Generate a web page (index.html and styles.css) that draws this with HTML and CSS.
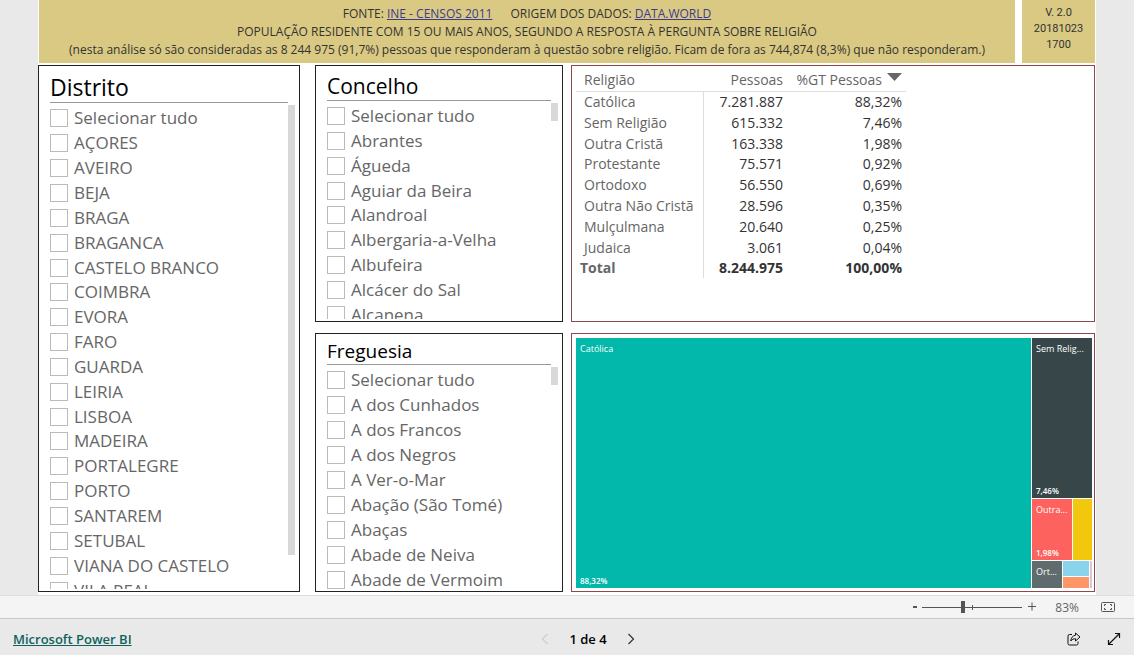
FILE: index.html
```html
<!DOCTYPE html>
<html lang="pt">
<head>
<meta charset="utf-8">
<title>Censos 2011 - Religião</title>
<link rel="stylesheet" href="styles.css">
</head>
<body>
<main class="report">
  <header class="banner">
    <div class="banner-text">
      <p>FONTE: <a href="#">INE - CENSOS 2011</a><span class="origin">ORIGEM DOS DADOS: <a href="#">DATA.WORLD</a></span></p>
      <p>POPULAÇÃO RESIDENTE COM 15 OU MAIS ANOS, SEGUNDO A RESPOSTA À PERGUNTA SOBRE RELIGIÃO</p>
      <p class="note">(nesta análise só são consideradas as 8 244 975 (91,7%) pessoas que responderam à questão sobre religião. Ficam de fora as 744,874 (8,3%) que não responderam.)</p>
    </div>
    <div class="version"><p>V. 2.0</p><p>20181023</p><p>1700</p></div>
  </header>
  <div class="visuals">
    <section class="slicer distrito">
      <h2>Distrito</h2>
      <div class="slicer-body">
        <div class="options">
          <label><input type="checkbox">Selecionar tudo</label>
          <label><input type="checkbox">AÇORES</label>
          <label><input type="checkbox">AVEIRO</label>
          <label><input type="checkbox">BEJA</label>
          <label><input type="checkbox">BRAGA</label>
          <label><input type="checkbox">BRAGANCA</label>
          <label><input type="checkbox">CASTELO BRANCO</label>
          <label><input type="checkbox">COIMBRA</label>
          <label><input type="checkbox">EVORA</label>
          <label><input type="checkbox">FARO</label>
          <label><input type="checkbox">GUARDA</label>
          <label><input type="checkbox">LEIRIA</label>
          <label><input type="checkbox">LISBOA</label>
          <label><input type="checkbox">MADEIRA</label>
          <label><input type="checkbox">PORTALEGRE</label>
          <label><input type="checkbox">PORTO</label>
          <label><input type="checkbox">SANTAREM</label>
          <label><input type="checkbox">SETUBAL</label>
          <label><input type="checkbox">VIANA DO CASTELO</label>
          <label><input type="checkbox">VILA REAL</label>
        </div>
        <div class="track"><div class="thumb thumb-long"></div></div>
      </div>
    </section>
    <div class="column">
      <section class="slicer concelho">
        <h2>Concelho</h2>
        <div class="slicer-body">
          <div class="options">
            <label><input type="checkbox">Selecionar tudo</label>
            <label><input type="checkbox">Abrantes</label>
            <label><input type="checkbox">Águeda</label>
            <label><input type="checkbox">Aguiar da Beira</label>
            <label><input type="checkbox">Alandroal</label>
            <label><input type="checkbox">Albergaria-a-Velha</label>
            <label><input type="checkbox">Albufeira</label>
            <label><input type="checkbox">Alcácer do Sal</label>
            <label><input type="checkbox">Alcanena</label>
          </div>
          <div class="track"><div class="thumb"></div></div>
        </div>
      </section>
      <section class="slicer freguesia">
        <h2>Freguesia</h2>
        <div class="slicer-body">
          <div class="options">
            <label><input type="checkbox">Selecionar tudo</label>
            <label><input type="checkbox">A dos Cunhados</label>
            <label><input type="checkbox">A dos Francos</label>
            <label><input type="checkbox">A dos Negros</label>
            <label><input type="checkbox">A Ver-o-Mar</label>
            <label><input type="checkbox">Abação (São Tomé)</label>
            <label><input type="checkbox">Abaças</label>
            <label><input type="checkbox">Abade de Neiva</label>
            <label><input type="checkbox">Abade de Vermoim</label>
          </div>
          <div class="track"><div class="thumb"></div></div>
        </div>
      </section>
    </div>
    <div class="column">
      <section class="panel">
        <table>
          <thead>
            <tr><th>Religião</th><th>Pessoas</th><th>%GT Pessoas<svg class="sort" viewBox="0 0 15 8" width="15" height="8"><path d="M0 0h15L7.500 8z" fill="#666"/></svg></th></tr>
          </thead>
          <tbody>
            <tr><td>Católica</td><td>7.281.887</td><td>88,32%</td></tr>
            <tr><td>Sem Religião</td><td>615.332</td><td>7,46%</td></tr>
            <tr><td>Outra Cristã</td><td>163.338</td><td>1,98%</td></tr>
            <tr><td>Protestante</td><td>75.571</td><td>0,92%</td></tr>
            <tr><td>Ortodoxo</td><td>56.550</td><td>0,69%</td></tr>
            <tr><td>Outra Não Cristã</td><td>28.596</td><td>0,35%</td></tr>
            <tr><td>Mulçulmana</td><td>20.640</td><td>0,25%</td></tr>
            <tr><td>Judaica</td><td>3.061</td><td>0,04%</td></tr>
          </tbody>
          <tfoot>
            <tr><td>Total</td><td>8.244.975</td><td>100,00%</td></tr>
          </tfoot>
        </table>
      </section>
      <section class="panel treemap">
        <div class="tile catolica"><span>Católica</span><span class="pct">88,32%</span></div>
        <div class="stack">
          <div class="tile sem"><span>Sem Relig...</span><span class="pct">7,46%</span></div>
          <div class="split middle">
            <div class="tile outra"><span>Outra...</span><span class="pct">1,98%</span></div>
            <div class="tile protestante"></div>
          </div>
          <div class="split bottom">
            <div class="tile ortodoxo"><span>Ort...</span></div>
            <div class="pair"><div class="tile nao-crista"></div><div class="tile muculmana"></div></div>
            <div class="tile judaica"></div>
          </div>
        </div>
      </section>
    </div>
  </div>
</main>
<div class="zoombar">
  <button class="minus" aria-label="Reduzir"><svg width="6" height="12" viewBox="0 0 6 12"><path d="M1 6h4" stroke="#555" stroke-width="2"/></svg></button>
  <input class="slider" type="range" min="0" max="100" value="40" aria-label="Zoom">
  <button class="plus" aria-label="Ampliar"><svg width="8" height="12" viewBox="0 0 8 12"><path d="M0 5.500h8M4 1.500v8" stroke="#555" fill="none"/></svg></button>
  <span class="level">83%</span>
  <button aria-label="Ajustar à página"><svg width="14" height="12" viewBox="0 0 14 12" fill="none" stroke="#555"><rect x=".5" y="1.500" width="13" height="9" rx="1"/><path d="M3.500 5V3.500H5M9 3.500h1.500V5M3.500 7v1.500H5M9 8.500h1.500V7"/></svg></button>
</div>
<footer class="footer">
  <a class="brand" href="#">Microsoft Power BI</a>
  <nav class="pager">
    <button aria-label="Anterior"><svg width="8" height="12" viewBox="0 0 8 12" fill="none" stroke="#bbb"><path d="M6.500 1l-5 5 5 5"/></svg></button>
    <span>1 de 4</span>
    <button aria-label="Seguinte"><svg width="8" height="12" viewBox="0 0 8 12" fill="none" stroke="#333" stroke-width="1.200"><path d="M1.500 1l5 5-5 5"/></svg></button>
  </nav>
  <div class="actions">
    <button aria-label="Partilhar"><svg width="14" height="14" viewBox="0 0 14 14" fill="none" stroke="#111" stroke-linejoin="round"><path d="M5 2.500H2.500a1.500 1.500 0 0 0-1.500 1.500v7.500a1.500 1.500 0 0 0 1.500 1.500h7a1.500 1.500 0 0 0 1.500-1.500v-2"/><path d="M8.500 1l4.500 4-4.500 4V6.800C6.500 6.700 5 7.300 3.800 9c.2-3 1.700-5.300 4.700-5.800z"/></svg></button>
    <button aria-label="Ecrã inteiro"><svg width="14" height="14" viewBox="0 0 14 14" fill="none" stroke="#111" stroke-width="1.200"><path d="M1.500 12.500l11-11M8 1.500h4.500V6M1.500 8v4.500H6"/></svg></button>
  </div>
</footer>
</body>
</html>
```
FILE: styles.css
```css
* { box-sizing: border-box; }

body {
  margin: 0;
  height: 100vh;
  display: flex;
  flex-direction: column;
  background: #e9e9e9;
  font-family: "Open Sans", "Noto Sans", sans-serif;
  color: #333;
}

p, h2 { margin: 0; font-weight: 400; }

button {
  display: flex;
  padding: 0;
  border: 0;
  background: none;
}

.report {
  flex: 1;
  min-height: 0;
  margin: 0 38px;
  padding-bottom: 3px;
  display: flex;
  flex-direction: column;
  gap: 2px;
  background: #fff;
}

.banner {
  display: flex;
  gap: 7px;
  padding: 0 1px;
  text-align: center;
  white-space: nowrap;
}

.banner-text {
  flex: 1;
  padding: 5px 0 4px;
  background: #dac982;
  font-size: 12px;
  line-height: 18px;
}

.banner-text a { color: #3c3c8c; }
.origin { margin-left: 18px; }

.version {
  width: 73px;
  padding-top: 5px;
  background: #dac982;
  font-family: Roboto, "Open Sans", sans-serif;
  font-size: 11px;
  font-weight: 300;
  line-height: 16px;
}

.visuals {
  flex: 1;
  min-height: 0;
  display: grid;
  grid-template-columns: 262fr 15px 248fr 8px 524fr;
  padding-right: 1px;
}

.visuals > :nth-child(2) { grid-column: 3; }
.visuals > :nth-child(3) { grid-column: 5; }

.column {
  min-height: 0;
  display: grid;
  grid-template-rows: minmax(0, 257fr) minmax(0, 259fr);
  row-gap: 11px;
}

.slicer {
  min-height: 0;
  padding: 0 4px 2px 11px;
  display: flex;
  flex-direction: column;
  border: 1px solid #222;
}

.slicer h2 {
  margin-right: 7px;
  border-bottom: 1px solid #999;
  color: #000;
}

.distrito h2 { padding-top: 6px; font-size: 23px; line-height: 30px; }
.concelho h2 { padding-top: 6px; font-size: 21px; line-height: 28px; }
.freguesia h2 { padding-top: 4px; font-size: 19px; line-height: 26px; }

.slicer-body {
  flex: 1;
  min-height: 0;
  padding-top: 2px;
  display: flex;
  overflow: hidden;
}

/* The rows share the height; the last one runs under the panel's edge. */
.options {
  flex: 1;
  display: grid;
  grid-auto-rows: 1fr;
  padding-top: 1px;
}

.distrito .options { height: calc(100% + 14px); }
.concelho .options { height: calc(100% + 8px); }
.freguesia .options { height: calc(100% + 3px); }

.options label {
  display: flex;
  align-items: center;
  gap: 6px;
  font-size: 17px;
  line-height: 24px;
  color: #666;
  white-space: nowrap;
}

.options input {
  appearance: none;
  width: 18px;
  height: 18px;
  margin: 0;
  border: 1px solid #bbb;
  background: #fff;
}

.thumb { width: 7px; height: 18px; background: #d8d8d8; }
.thumb-long { height: 450px; }

.panel {
  min-height: 0;
  padding: 4px;
  border: 1px solid #8c4a4f;
}

table {
  border-collapse: collapse;
  table-layout: fixed;
  width: 330px;
  height: 208px;
  font-size: 14px;
  line-height: 20px;
}

th, td {
  padding: 0 4px 0 8px;
  text-align: right;
  font-weight: 400;
  white-space: nowrap;
}

th { width: 84px; border-bottom: 1px solid #ddd; color: #666; height: 21px; }
th:first-child { width: 127px; }
th:last-child { width: 119px; }
th:first-child, td:first-child { text-align: left; color: #666; }
td:first-child { border-right: 1px solid #ddd; }
tfoot td { font-weight: 700; }
tfoot td:first-child { padding-left: 4px; }

.sort { margin: 0 0 4px 5px; }

.treemap {
  display: grid;
  grid-template-columns: 455fr 60fr;
  gap: 1px;
  padding: 4px 2px 3px 4px;
}

.stack {
  min-width: 0;
  display: grid;
  grid-template-rows: 159fr 61fr 27fr;
  gap: 1px;
}

.split { display: grid; gap: 1px; min-width: 0; min-height: 0; }
.middle { grid-template-columns: 40fr 19fr; }
.bottom { grid-template-columns: 30fr 26fr 2fr; }
.pair { display: grid; grid-template-rows: 15fr 11fr; gap: 1px; min-width: 0; }

.tile {
  min-width: 0;
  min-height: 0;
  padding: 4px 0 0 4px;
  display: flex;
  flex-direction: column;
  justify-content: space-between;
  overflow: hidden;
  color: #fff;
  font-size: 9px;
  font-weight: 500;
  line-height: 14px;
  white-space: nowrap;
}

.stack .nao-crista, .stack .muculmana, .stack .judaica { padding: 0; }
.pct { font-size: 8px; font-weight: 600; }

.catolica { background: #01b8aa; }
.sem { background: #374649; }
.outra { background: #fd625e; }
.protestante { background: #f2c80f; }
.ortodoxo { background: #5f6b6d; }
.nao-crista { background: #8ad4eb; }
.muculmana { background: #fe9666; }
.judaica { background: #dbc4d4; }

.zoombar {
  height: 24px;
  padding: 0 19px;
  display: flex;
  align-items: center;
  justify-content: flex-end;
  background: #f4f4f4;
  border-top: 1px solid #ddd;
  border-bottom: 1px solid #c8c8c8;
  font-size: 12px;
  color: #666;
}

.minus { margin-right: 4px; }
.plus { margin: 0 19px 0 6px; }
.level { margin-right: 22px; }

.slider {
  appearance: none;
  width: 100px;
  height: 12px;
  margin: 0;
  background:
    linear-gradient(#555, #555) center / 1px 5px no-repeat,
    linear-gradient(#555, #555) center / 100% 1px no-repeat;
}

.slider::-webkit-slider-thumb {
  appearance: none;
  width: 4px;
  height: 12px;
  background: #555;
}

.footer {
  height: 36px;
  padding: 3px 13px 0;
  display: grid;
  grid-template-columns: 1fr auto 1fr;
  align-items: center;
}

.brand { color: #0f635c; font-size: 13px; font-weight: 600; }

.pager {
  display: flex;
  align-items: center;
  gap: 20px;
  margin-left: 42px;
  color: #000;
  font-size: 13px;
  font-weight: 600;
}

.actions { display: flex; justify-content: flex-end; gap: 26px; }
```
